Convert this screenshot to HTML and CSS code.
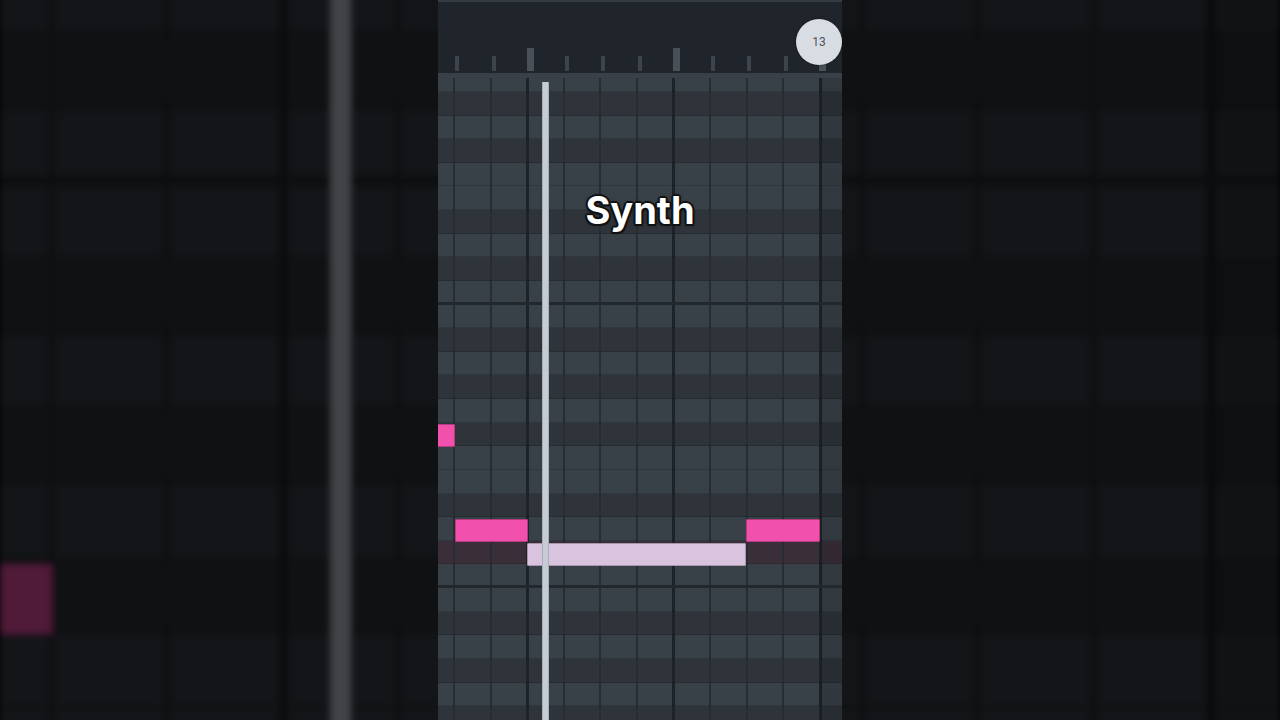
FILE: index.html
```html
<!DOCTYPE html>
<html lang="en">
<head>
    <meta charset="UTF-8">
    <meta name="viewport" content="width=device-width, initial-scale=1.0">
    <title>Synth - Piano Roll</title>
    <link rel="stylesheet" href="styles.css">
</head>
<body>
    <div class="stage">
        <div class="backdrop" id="backdrop"></div>

        <div class="roll" id="roll">
            <div class="ruler">
                <div class="ticks">
                    <span class="tick"></span>
                    <span class="tick"></span>
                    <span class="tick bar"></span>
                    <span class="tick"></span>
                    <span class="tick"></span>
                    <span class="tick"></span>
                    <span class="tick bar"></span>
                    <span class="tick"></span>
                    <span class="tick"></span>
                    <span class="tick"></span>
                    <span class="tick bar"></span>
                </div>
                <div class="marker">13</div>
            </div>

            <div class="grid">
                <div class="rows">
                    <div class="row white"></div>  <!-- A -->
                    <div class="row black"></div>  <!-- G# -->
                    <div class="row white"></div>  <!-- G -->
                    <div class="row black"></div>  <!-- F# -->
                    <div class="row white"></div>  <!-- F -->
                    <div class="row white"></div>  <!-- E -->
                    <div class="row black"></div>  <!-- D# -->
                    <div class="row white"></div>  <!-- D -->
                    <div class="row black"></div>  <!-- C# -->
                    <div class="row white octave"></div>  <!-- C -->
                    <div class="row white"></div>  <!-- B -->
                    <div class="row black"></div>  <!-- A# -->
                    <div class="row white"></div>  <!-- A -->
                    <div class="row black"></div>  <!-- G# -->
                    <div class="row white"></div>  <!-- G -->
                    <div class="row black"></div>  <!-- F# -->
                    <div class="row white"></div>  <!-- F -->
                    <div class="row white"></div>  <!-- E -->
                    <div class="row black"></div>  <!-- D# -->
                    <div class="row white"></div>  <!-- D -->
                    <div class="row black active"></div>  <!-- C# -->
                    <div class="row white octave"></div>  <!-- C -->
                    <div class="row white"></div>  <!-- B -->
                    <div class="row black"></div>  <!-- A# -->
                    <div class="row white"></div>  <!-- A -->
                    <div class="row black"></div>  <!-- G# -->
                    <div class="row white"></div>  <!-- G -->
                    <div class="row black"></div>  <!-- F# -->
                </div>

                <div class="note pink" style="left: -6px; width: 22.5px; top: 346px;"></div>
                <div class="note pink" style="left: 16.7px; width: 73.3px; top: 441px;"></div>
                <div class="note pink" style="left: 308px; width: 74px; top: 441px;"></div>
                <div class="note lilac" style="left: 89.3px; width: 219px; top: 465px;"></div>

                <div class="playhead"></div>
            </div>
        </div>

        <div class="caption">Synth</div>
    </div>

    <script>
        // the blurred side fill is just the same roll, scaled up
        const copy = document.getElementById('roll').cloneNode(true);
        copy.removeAttribute('id');
        copy.querySelector('.marker').remove(); // off screen anyway
        document.getElementById('backdrop').appendChild(copy);
    </script>
</body>
</html>
```

FILE: styles.css
```css
* {
    box-sizing: border-box;
}

body {
    margin: 0;
    background: #000;
    font-family: 'Inter', 'Roboto', sans-serif;
    overflow: hidden;
}

.stage {
    position: relative;
    width: 1280px;
    height: 720px;
    display: flex;
    justify-content: center;
    overflow: hidden;
    background: #000;
}

.backdrop {
    position: absolute;
    inset: -30px;
    display: flex;
    justify-content: center;
    align-items: center;
    filter: blur(3px) brightness(0.33);
}

.backdrop .roll {
    flex: none;
    transform: scale(3.1683);
}

.roll {
    position: relative;
    z-index: 1;
    width: 404px;
    height: 720px;
    overflow: hidden;
    background: #1f252b;
}

/* ruler */
.ruler {
    position: relative;
    height: 78px;
    display: flex;
    align-items: flex-end;
    padding: 0 0 2px 0.7px;
    background: #1f252b;
    border-top: 2px solid #353b42;
    border-bottom: 5px solid #394047;
}

.ticks {
    display: flex;
}

.tick {
    flex: 0 0 36.57px;
    height: 23px;
    display: flex;
    justify-content: center;
    align-items: flex-end;
}

.tick::before {
    content: '';
    width: 4px;
    height: 15px;
    background: #3e444b;
}

.tick.bar::before {
    width: 7px;
    height: 23px;
    background: #4a5057;
}

.marker {
    position: absolute;
    left: 358px;
    top: 17px;
    width: 46px;
    height: 46px;
    border-radius: 50%;
    background: #d8dce3;
    color: #4d535a;
    font-family: 'Roboto', sans-serif;
    font-size: 12px;
    display: flex;
    justify-content: center;
    align-items: center;
    box-shadow: 0 0 3px rgba(0, 0, 0, 0.3);
}

/* note grid */
.grid {
    --beats: repeating-linear-gradient(90deg, transparent 0 15px, #272d33 15px 17px, transparent 17px 36.57px);
    --bars: repeating-linear-gradient(90deg, transparent 0 88px, #1e2328 88px 91px, transparent 91px 146.28px);
    --end: linear-gradient(90deg, transparent 382px, rgba(8, 10, 12, 0.16) 382px);
    position: relative;
    height: 642px;
    overflow: hidden;
}

.rows {
    margin-top: -9.75px;
}

.row {
    height: 23.625px;
    box-shadow: inset 0 -1px 0 rgba(0, 0, 0, 0.14);
}

.row.white {
    background: var(--end), var(--bars), var(--beats), #394148;
}

.row.black {
    background: var(--end), var(--bars), var(--beats), #2e343a;
}

.row.active {
    background: var(--end), var(--bars), var(--beats), #3a2f39;
}

.row.octave {
    box-shadow: inset 0 -3px 0 #23282d;
}

.note {
    position: absolute;
    height: 22.5px;
    border: 1px solid;
    border-radius: 1px;
}

.note.pink {
    background: #f250ad;
    border-color: #b63a80;
}

.note.lilac {
    background: #d9c3de;
    border-color: #a894ad;
}

.playhead {
    position: absolute;
    left: 104px;
    top: 4px;
    bottom: 0;
    width: 7px;
    background: #c6cbd4;
    box-shadow: inset 1px 0 0 #a9afb9, inset -1px 0 0 #a9afb9;
}

/* overlay text */
.caption {
    position: absolute;
    z-index: 2;
    left: 0;
    right: 0;
    top: 191px;
    text-align: center;
    color: #fff;
    font-family: 'Inter', sans-serif;
    font-weight: 700;
    font-size: 38px;
    line-height: 1;
    text-shadow:
        2px 0 0 #111, -2px 0 0 #111, 0 2px 0 #111, 0 -2px 0 #111,
        1.5px 1.5px 0 #111, -1.5px 1.5px 0 #111, 1.5px -1.5px 0 #111, -1.5px -1.5px 0 #111,
        0 0 4px rgba(0, 0, 0, 0.6);
}
```
